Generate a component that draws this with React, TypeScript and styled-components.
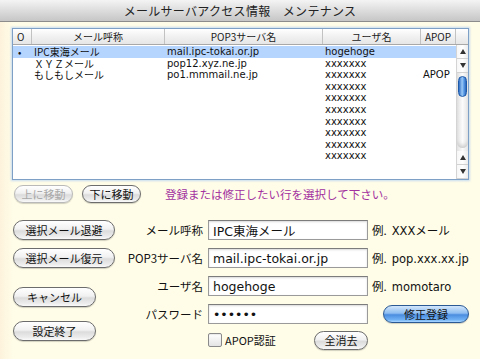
import styled, { createGlobalStyle, css } from 'styled-components';

const GlobalStyle = createGlobalStyle`
    html, body {
        margin: 0;
        padding: 0;
        background: #fffde8;
    }
    body {
        font-family: "DejaVu Sans", "Noto Sans CJK JP", sans-serif;
        color: #111;
    }
`;

const jpFont = `"Noto Sans CJK JP", "DejaVu Sans", sans-serif`;

type Account = { name: string; server: string; user: string; apop: boolean };

const accounts: Account[] = [
    { name: 'IPC東海メール', server: 'mail.ipc-tokai.or.jp', user: 'hogehoge', apop: false },
    { name: 'ＸＹＺメール', server: 'pop12.xyz.ne.jp', user: 'xxxxxxx', apop: false },
    { name: 'もしもしメール', server: 'po1.mmmail.ne.jp', user: 'xxxxxxx', apop: true },
];
const extraUsers = 7;

const COLS = '19px 133px 158px 98px 35px';

const Page = styled.div`
    width: 480px;
    height: 359px;
    overflow: hidden;
    background: linear-gradient(90deg, #fdf3dc 0px, #fffde8 14px);
`;

const TitleBar = styled.div`
    height: 22px;
    box-sizing: border-box;
    border-bottom: 1px solid #8c8c8c;
    background: linear-gradient(#f4f4f4, #d8d8d8 60%, #c6c6c6);
    display: flex;
    align-items: center;
    justify-content: center;
    font-family: ${jpFont};
    font-size: 12px;
    color: #222;
    letter-spacing: 0.3px;
`;

const Content = styled.div`
    padding: 6px 11px 0 12px;
`;

const ListPanel = styled.div`
    width: 457px;
    height: 152px;
    box-sizing: border-box;
    border: 1px solid #7e9fc6;
    box-shadow: 0 0 2px 1px #c6daf0;
    background: #fff;
    display: flex;
    flex-direction: column;
`;

const HeaderRow = styled.div`
    display: grid;
    grid-template-columns: ${COLS} 1fr;
    height: 16px;
    box-sizing: border-box;
    border-bottom: 1px solid #a8a8a8;
    background: linear-gradient(#ffffff, #f1f1f1 50%, #e6e6e6);
`;

const HeaderCell = styled.div<{ $left?: boolean }>`
    border-right: 1px solid #c2c2c2;
    display: flex;
    align-items: center;
    justify-content: ${(p) => (p.$left ? 'flex-start' : 'center')};
    padding-left: ${(p) => (p.$left ? '4px' : '0')};
    font-family: ${jpFont};
    font-size: 10px;
    color: #222;
    &:last-child {
        border-right: none;
    }
`;

const ListBody = styled.div`
    flex: 1;
    display: flex;
    min-height: 0;
`;

const Rows = styled.div`
    flex: 1;
    padding-top: 1px;
`;

const Row = styled.div<{ $selected?: boolean }>`
    display: grid;
    grid-template-columns: ${COLS};
    height: 11.6px;
    line-height: 11.6px;
    font-family: ${jpFont};
    font-size: 10px;
    background: ${(p) => (p.$selected ? '#b5d5ff' : 'transparent')};
`;

const Cell = styled.div<{ $mono?: boolean }>`
    padding-left: 2px;
    white-space: nowrap;
    font-family: ${(p) => (p.$mono ? `"DejaVu Sans", sans-serif` : jpFont)};
    font-size: 10px;
`;

const Bullet = styled.div`
    padding-left: 5px;
    font-size: 10px;
`;

const ScrollBar = styled.div`
    width: 12px;
    border-left: 1px solid #d4d4d4;
    display: flex;
    flex-direction: column;
    background: linear-gradient(90deg, #e2e2e2, #fbfbfb 50%, #e6e6e6);
`;

const ArrowBtn = styled.div<{ $down?: boolean }>`
    height: 13px;
    display: flex;
    align-items: center;
    justify-content: center;
    border-bottom: 1px solid #d2d2d2;
    background: linear-gradient(90deg, #f6f6f6, #ffffff 50%, #ececec);
    &::after {
        content: '';
        width: 0;
        height: 0;
        border-left: 3px solid transparent;
        border-right: 3px solid transparent;
        ${(p) =>
            p.$down
                ? css`border-top: 5px solid #333;`
                : css`border-bottom: 5px solid #333;`}
    }
`;

const Track = styled.div`
    flex: 1;
    padding: 3px 1px 0;
    display: flex;
    flex-direction: column;
    border-radius: 0 0 6px 6px;
    box-shadow: inset 0 -4px 4px -2px #c9c9c9;
    margin-bottom: 3px;
`;

const Thumb = styled.div`
    height: 19px;
    border-radius: 6px;
    border: 1px solid #1e5aa8;
    background: linear-gradient(90deg, #2f6fc8, #9cc9f6 45%, #5a9be6 70%, #2d67bc);
`;

const MoveRow = styled.div`
    display: flex;
    align-items: center;
    gap: 9px;
    margin-top: 5px;
    padding-left: 2px;
    height: 18px;
`;

const AquaButton = styled.button<{ $w: number; $h?: number; $blue?: boolean; $disabled?: boolean }>`
    width: ${(p) => p.$w}px;
    height: ${(p) => p.$h ?? 20}px;
    padding: 0;
    border-radius: 10px;
    border: 1px solid ${(p) => (p.$blue ? '#2b5994' : p.$disabled ? '#b9b9b9' : '#6c6c6c')};
    background: ${(p) =>
        p.$blue
            ? 'linear-gradient(#d3e6fb, #8dbdf1 45%, #4b8ddf 55%, #6fb0f4 85%, #a9d6ff)'
            : 'linear-gradient(#ffffff, #f1f1f1 45%, #dcdcdc 55%, #ececec 85%, #fafafa)'};
    box-shadow: 0 1px 1px rgba(0, 0, 0, 0.18);
    font-family: ${jpFont};
    font-size: 11px;
    color: ${(p) => (p.$disabled ? '#a8a8a8' : '#111')};
    display: flex;
    align-items: center;
    justify-content: center;
    cursor: default;
`;

const Message = styled.div`
    margin-left: 15px;
    font-family: ${jpFont};
    font-size: 11.5px;
    color: #a2309f;
`;

const FormArea = styled.div`
    display: flex;
    margin-top: 17px;
    padding-left: 1px;
`;

const SideButtons = styled.div`
    width: 102px;
    display: flex;
    flex-direction: column;
    align-items: flex-start;
`;

const Spacer = styled.div<{ $h: number }>`
    height: ${(p) => p.$h}px;
`;

const FormGrid = styled.div`
    display: grid;
    grid-template-columns: 88px 160px auto;
    grid-auto-rows: 20px;
    column-gap: 5px;
    row-gap: 8px;
    align-items: center;
`;

const Label = styled.div`
    text-align: right;
    font-family: ${jpFont};
    font-size: 11.5px;
`;

const TextInput = styled.input`
    box-sizing: border-box;
    width: 160px;
    height: 20px;
    border: 1px solid #9a9a9a;
    border-top-color: #7c7c7c;
    box-shadow: inset 0 1px 2px rgba(0, 0, 0, 0.15);
    background: #fff;
    padding: 0 4px;
    font-family: "DejaVu Sans", "Noto Sans CJK JP", sans-serif;
    font-size: 12.5px;
    color: #111;
    outline: none;
`;

const Example = styled.div`
    margin-left: -1px;
    font-family: "DejaVu Sans", "Noto Sans CJK JP", sans-serif;
    font-size: 11.5px;
    white-space: nowrap;
    span {
        font-family: ${jpFont};
        margin-right: 5px;
    }
`;

const SubmitWrap = styled.div`
    padding-left: 10px;
    display: flex;
    align-items: center;
`;

const OptionRow = styled.div`
    grid-column: 2;
    display: flex;
    align-items: center;
    justify-content: space-between;
    margin-top: -4px;
`;

const CheckLabel = styled.label`
    display: flex;
    align-items: center;
    gap: 3px;
    font-family: ${jpFont};
    font-size: 11px;
`;

const CheckBox = styled.span`
    width: 12px;
    height: 12px;
    border: 1px solid #8a8a8a;
    border-radius: 2px;
    background: linear-gradient(#ffffff, #e4e4e4);
    box-shadow: inset 0 1px 1px rgba(0, 0, 0, 0.08);
`;

export default function App() {
    return (
        <Page>
            <GlobalStyle />
            <TitleBar>メールサーバアクセス情報　メンテナンス</TitleBar>
            <Content>
                <ListPanel>
                    <HeaderRow>
                        <HeaderCell $left>O</HeaderCell>
                        <HeaderCell>メール呼称</HeaderCell>
                        <HeaderCell>POP3サーバ名</HeaderCell>
                        <HeaderCell>ユーザ名</HeaderCell>
                        <HeaderCell>APOP</HeaderCell>
                        <HeaderCell />
                    </HeaderRow>
                    <ListBody>
                        <Rows>
                            {accounts.map((a, i) => (
                                <Row key={a.name} $selected={i === 0}>
                                    <Bullet>{i === 0 ? '•' : ''}</Bullet>
                                    <Cell>{a.name}</Cell>
                                    <Cell $mono>{a.server}</Cell>
                                    <Cell $mono>{a.user}</Cell>
                                    <Cell $mono>{a.apop ? 'APOP' : ''}</Cell>
                                </Row>
                            ))}
                            {Array.from({ length: extraUsers }).map((_, i) => (
                                <Row key={'x' + i}>
                                    <Bullet />
                                    <Cell />
                                    <Cell />
                                    <Cell $mono>xxxxxxx</Cell>
                                    <Cell />
                                </Row>
                            ))}
                        </Rows>
                        <ScrollBar>
                            <ArrowBtn />
                            <ArrowBtn $down />
                            <Track>
                                <Thumb />
                            </Track>
                            <ArrowBtn />
                            <ArrowBtn $down />
                        </ScrollBar>
                    </ListBody>
                </ListPanel>

                <MoveRow>
                    <AquaButton $w={59} $h={18} $disabled>上に移動</AquaButton>
                    <AquaButton $w={59} $h={18}>下に移動</AquaButton>
                    <Message>登録または修正したい行を選択して下さい。</Message>
                </MoveRow>

                <FormArea>
                    <SideButtons>
                        <AquaButton $w={102}>選択メール退避</AquaButton>
                        <Spacer $h={8} />
                        <AquaButton $w={102}>選択メール復元</AquaButton>
                        <Spacer $h={19} />
                        <AquaButton $w={83}>キャンセル</AquaButton>
                        <Spacer $h={14} />
                        <AquaButton $w={83}>設定終了</AquaButton>
                    </SideButtons>
                    <FormGrid>
                        <Label>メール呼称</Label>
                        <TextInput defaultValue="IPC東海メール" />
                        <Example><span>例.</span>XXXメール</Example>

                        <Label>POP3サーバ名</Label>
                        <TextInput defaultValue="mail.ipc-tokai.or.jp" />
                        <Example><span>例.</span>pop.xxx.xx.jp</Example>

                        <Label>ユーザ名</Label>
                        <TextInput defaultValue="hogehoge" />
                        <Example><span>例.</span>momotaro</Example>

                        <Label>パスワード</Label>
                        <TextInput type="password" defaultValue="hogeho" />
                        <SubmitWrap>
                            <AquaButton $w={86} $h={18} $blue>修正登録</AquaButton>
                        </SubmitWrap>

                        <OptionRow>
                            <CheckLabel>
                                <CheckBox />
                                APOP認証
                            </CheckLabel>
                            <AquaButton $w={54} $h={19}>全消去</AquaButton>
                        </OptionRow>
                    </FormGrid>
                </FormArea>
            </Content>
        </Page>
    );
}
